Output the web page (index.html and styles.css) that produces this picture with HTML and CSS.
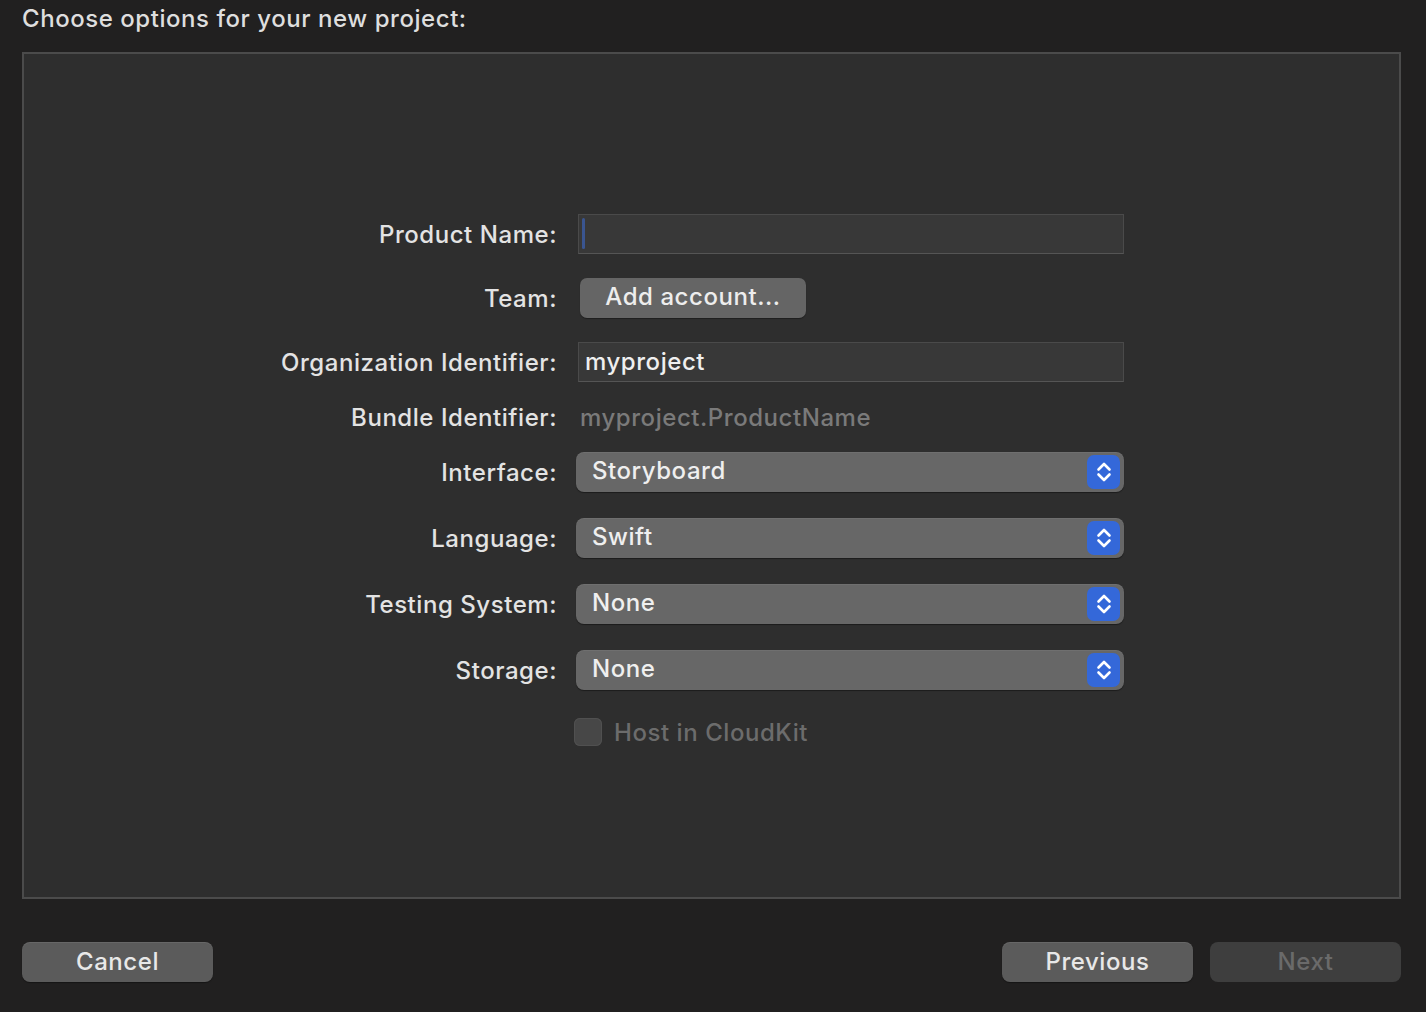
FILE: index.html
```html
<!DOCTYPE html>
<html lang="en">

<head>
    <meta charset="UTF-8">
    <title>Choose options for your new project</title>
    <link rel="stylesheet" href="styles.css">
</head>

<body>
    <div class="sheet-title">Choose options for your new project:</div>

    <div class="panel">
        <div class="form">
            <label class="label">Product Name:</label>
            <div class="cell"><div class="text-field"><span class="caret"></span></div></div>

            <label class="label">Team:</label>
            <div class="cell"><button class="push-btn">Add account...</button></div>

            <label class="label">Organization Identifier:</label>
            <div class="cell"><div class="text-field">myproject</div></div>

            <label class="label">Bundle Identifier:</label>
            <div class="cell"><span class="static-value">myproject.ProductName</span></div>

            <label class="label">Interface:</label>
            <div class="cell">
                <div class="popup">Storyboard
                    <span class="stepper"><svg viewBox="0 0 16 24" width="16" height="24"><path d="M2.5 9.5 L8 4 L13.5 9.5 M2.5 14.5 L8 20 L13.5 14.5" /></svg></span>
                </div>
            </div>

            <label class="label">Language:</label>
            <div class="cell">
                <div class="popup">Swift
                    <span class="stepper"><svg viewBox="0 0 16 24" width="16" height="24"><path d="M2.5 9.5 L8 4 L13.5 9.5 M2.5 14.5 L8 20 L13.5 14.5" /></svg></span>
                </div>
            </div>

            <label class="label">Testing System:</label>
            <div class="cell">
                <div class="popup">None
                    <span class="stepper"><svg viewBox="0 0 16 24" width="16" height="24"><path d="M2.5 9.5 L8 4 L13.5 9.5 M2.5 14.5 L8 20 L13.5 14.5" /></svg></span>
                </div>
            </div>

            <label class="label">Storage:</label>
            <div class="cell">
                <div class="popup">None
                    <span class="stepper"><svg viewBox="0 0 16 24" width="16" height="24"><path d="M2.5 9.5 L8 4 L13.5 9.5 M2.5 14.5 L8 20 L13.5 14.5" /></svg></span>
                </div>
            </div>

            <div></div>
            <div class="cell">
                <div class="checkbox-row"><span class="checkbox"></span>Host in CloudKit</div>
            </div>
        </div>
    </div>

    <div class="footer">
        <button class="footer-btn">Cancel</button>
        <div class="footer-right">
            <button class="footer-btn">Previous</button>
            <button class="footer-btn disabled">Next</button>
        </div>
    </div>
</body>

</html>
```

FILE: styles.css
```css
body {
    margin: 0;
    padding: 0 25px 0 22px;
    background-color: #212020;
    font-family: Inter, "Open Sans", sans-serif;
    font-size: 24px;
    font-weight: 500;
    letter-spacing: 0.55px;
    color: #e2e2e2;
    height: 1012px;
    box-sizing: border-box;
    overflow: hidden;
}

.sheet-title {
    height: 52px;
    line-height: 38px;
    color: #dedede;
}

.panel {
    height: 847px;
    box-sizing: border-box;
    border: 2px solid #4b4b4b;
    background-color: #2e2e2e;
    padding-top: 148px;
}

.form {
    display: grid;
    grid-template-columns: 533px 548px;
    grid-template-rows: 64px 64px 64px 46px 64px 68px 64px 68px 56px;
    column-gap: 19px;
    align-items: center;
}

.label {
    text-align: right;
    color: #e3e3e3;
    padding-top: 1px;
}

.cell {
    display: flex;
    align-items: center;
}

.text-field {
    box-sizing: border-box;
    margin-left: 2px;
    width: 546px;
    height: 40px;
    background-color: #383838;
    border: 1px solid #4a4a4a;
    border-bottom-color: #555;
    padding: 0 6px;
    line-height: 38px;
    color: #efefef;
}

.caret {
    display: inline-block;
    width: 3px;
    height: 31px;
    margin-top: 3px;
    margin-left: -3px;
    border-radius: 2px;
    background-color: #3a5590;
    vertical-align: top;
}

.push-btn {
    margin-left: 4px;
    width: 226px;
    height: 40px;
    border: none;
    border-radius: 7px;
    background-color: #656565;
    box-shadow: 0 1px 1px rgba(0, 0, 0, 0.35);
    color: #ededed;
    font-family: inherit;
    font-size: inherit;
    font-weight: inherit;
    letter-spacing: inherit;
    padding: 0 0 3px;
}

.static-value {
    margin-left: 4px;
    color: #7a7a7a;
}

.popup {
    position: relative;
    box-sizing: border-box;
    width: 548px;
    height: 40px;
    border-radius: 8px;
    background-color: #676767;
    box-shadow: 0 1px 1px rgba(0, 0, 0, 0.4), inset 0 1px 0 rgba(255, 255, 255, 0.06);
    padding-left: 16px;
    line-height: 37px;
    color: #efefef;
}

.stepper {
    position: absolute;
    right: 4px;
    top: 3px;
    width: 33px;
    height: 34px;
    border-radius: 7px;
    background-color: #3468d9;
    display: flex;
    align-items: center;
    justify-content: center;
}

.stepper svg path {
    fill: none;
    stroke: #fff;
    stroke-width: 2.6;
    stroke-linecap: round;
    stroke-linejoin: round;
}

.checkbox-row {
    display: flex;
    align-items: center;
    gap: 12px;
    margin-left: -2px;
    color: #6c6c6c;
}

.checkbox {
    width: 28px;
    height: 28px;
    border-radius: 6px;
    background-color: #474747;
    box-shadow: inset 0 0 0 1px #505050;
}

.footer {
    display: flex;
    justify-content: space-between;
    margin-top: 43px;
}

.footer-right {
    display: flex;
    gap: 17px;
}

.footer-btn {
    width: 191px;
    height: 40px;
    border: none;
    border-radius: 8px;
    background-color: #5b5b5b;
    box-shadow: 0 1px 1px rgba(0, 0, 0, 0.35), inset 0 1px 0 rgba(255, 255, 255, 0.08);
    color: #e8e8e8;
    font-family: inherit;
    font-size: inherit;
    font-weight: inherit;
    letter-spacing: inherit;
    padding: 0 0 2px;
}

.footer-btn.disabled {
    background-color: #3e3e3e;
    color: #6a6a6a;
    box-shadow: none;
}
```
